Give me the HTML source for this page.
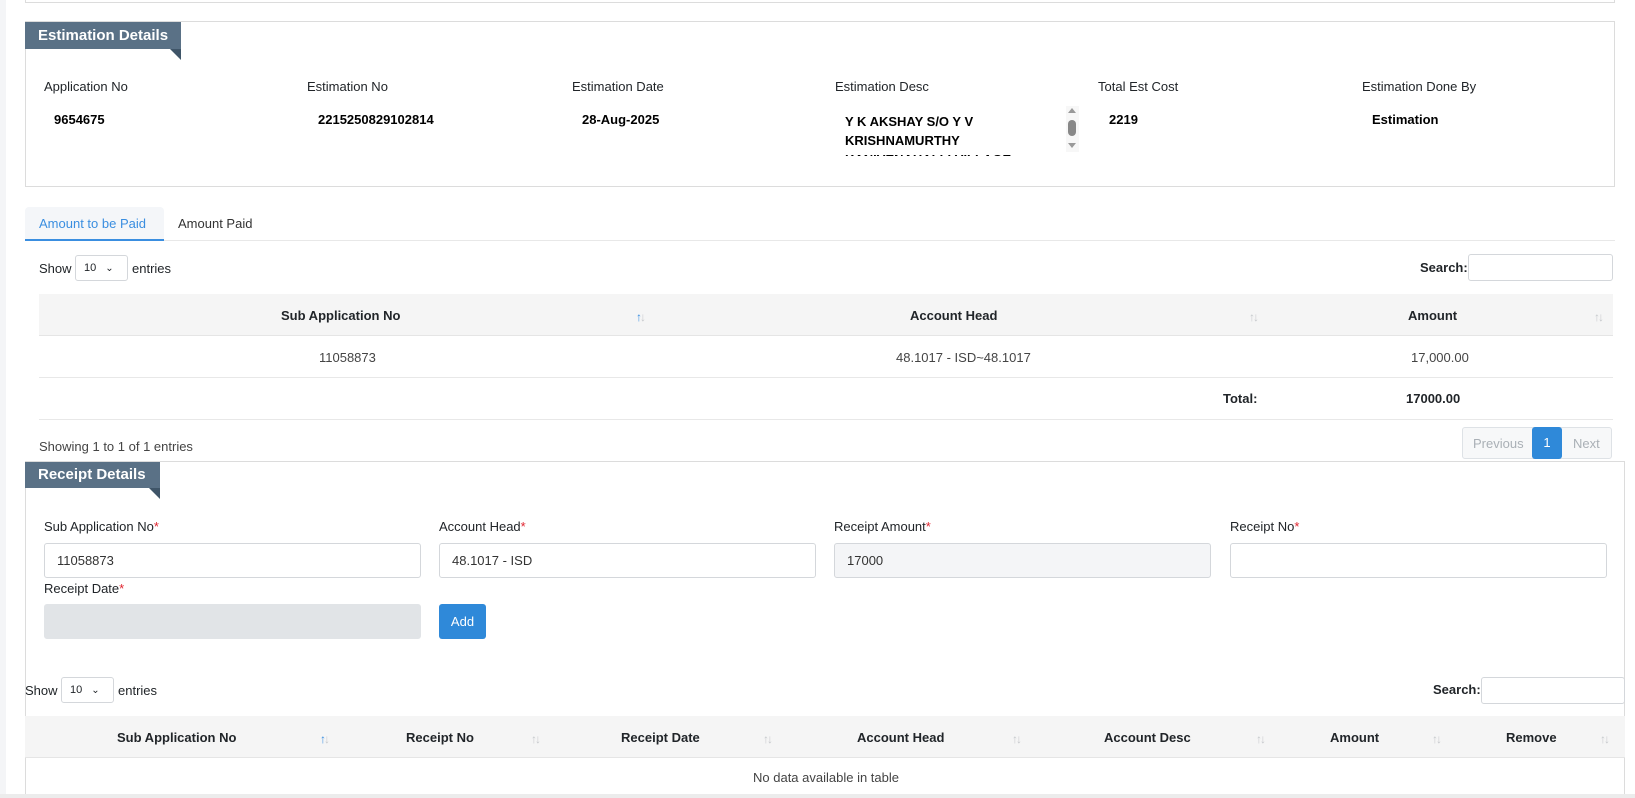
<!DOCTYPE html>
<html><head><meta charset="utf-8"><style>
*{box-sizing:border-box;margin:0;padding:0}
html{width:1635px;height:798px;overflow:hidden}
body{width:1635px;height:798px;overflow:hidden;background:#fff;font-family:"Liberation Sans",sans-serif;font-size:13px;color:#212529;position:relative}
.a{position:absolute;white-space:nowrap}
.box{position:absolute;border:1px solid #dcdcdc;background:#fff}
.tab{position:absolute;background:#5a7186;color:#fff;font-weight:bold;font-size:15px;padding-left:13px;line-height:27px}
.tail{position:absolute;width:0;height:0;border-top:11px solid #3f5568;border-left:11px solid transparent}
.lbl{font-size:13px;color:#212529}
.val{font-weight:bold;font-size:13px;color:#000}
.inp{position:absolute;border:1px solid #d4d7db;border-radius:3px;background:#fff;height:35px;padding-left:12px;line-height:33px;font-size:13px;color:#333}
.thead{position:absolute;background:#f5f5f5;border-bottom:1px solid #e5e5e5}
.hl{position:absolute;height:1px;background:#e8e8e8}
.sort{position:absolute;font-size:12px;color:#c6c9cc;letter-spacing:-2px}
.sort b{color:#3a8ee0;font-weight:normal}
.req{color:#e0242f}
</style></head><body>
<div class="a" style="left:0;top:0;width:6px;height:798px;background:#f4f5f7"></div>
<div class="a" style="left:25px;top:0;width:1590px;height:3px;border:1px solid #dcdcdc;border-top:none"></div>

<div class="box" style="left:25px;top:21px;width:1590px;height:166px"></div>
<div class="tab" style="left:25px;top:22px;width:156px;height:27px">Estimation Details</div>
<div class="tail" style="left:170px;top:49px"></div>
<div class="a lbl" style="left:44px;top:79px">Application No</div>
<div class="a lbl" style="left:307px;top:79px">Estimation No</div>
<div class="a lbl" style="left:572px;top:79px">Estimation Date</div>
<div class="a lbl" style="left:835px;top:79px">Estimation Desc</div>
<div class="a lbl" style="left:1098px;top:79px">Total Est Cost</div>
<div class="a lbl" style="left:1362px;top:79px">Estimation Done By</div>
<div class="a val" style="left:54px;top:112px">9654675</div>
<div class="a val" style="left:318px;top:112px">2215250829102814</div>
<div class="a val" style="left:582px;top:112px">28-Aug-2025</div>
<div class="a val" style="left:845px;top:112px;line-height:19px;height:44px;overflow:hidden">Y K AKSHAY S/O Y V<br>KRISHNAMURTHY<br>KANIVENAHALLI VILLAGE</div>
<div class="a" style="left:1066px;top:106px;width:13px;height:46px;background:#f7f7f7"></div>
<div class="a" style="left:1068px;top:108px;width:0;height:0;border-left:4px solid transparent;border-right:4px solid transparent;border-bottom:5px solid #999"></div>
<div class="a" style="left:1068px;top:120px;width:8px;height:16px;border-radius:4px;background:#888"></div>
<div class="a" style="left:1068px;top:143px;width:0;height:0;border-left:4px solid transparent;border-right:4px solid transparent;border-top:5px solid #999"></div>
<div class="a val" style="left:1109px;top:112px">2219</div>
<div class="a val" style="left:1372px;top:112px">Estimation</div>

<div class="a" style="left:25px;top:207px;width:139px;height:34px;background:#f4f6f9;border-radius:4px 4px 0 0;border-bottom:2px solid #3a8ee0"></div>
<div class="a" style="left:39px;top:216px;color:#3a8ee0">Amount to be Paid</div>
<div class="a" style="left:178px;top:216px;color:#333">Amount Paid</div>
<div class="hl" style="left:164px;top:240px;width:1451px"></div>

<div class="a" style="left:39px;top:261px">Show</div>
<div class="a" style="left:75px;top:255px;width:53px;height:26px;border:1px solid #d4d7db;border-radius:3px;font-size:11px;line-height:24px;padding-left:8px">10 <span style="margin-left:6px;font-size:10px">&#8964;</span></div>
<div class="a" style="left:132px;top:261px">entries</div>
<div class="a" style="left:1420px;top:260px;font-weight:bold">Search:</div>
<div class="a" style="left:1468px;top:254px;width:145px;height:27px;border:1px solid #d4d7db;border-radius:3px"></div>

<div class="thead" style="left:39px;top:294px;width:1574px;height:42px"></div>
<div class="a" style="left:281px;top:308px;font-weight:bold">Sub Application No</div>
<div class="sort" style="left:636px;top:310px"><b>&#8593;</b>&#8595;</div>
<div class="a" style="left:910px;top:308px;font-weight:bold">Account Head</div>
<div class="sort" style="left:1249px;top:310px">&#8593;&#8595;</div>
<div class="a" style="left:1408px;top:308px;font-weight:bold">Amount</div>
<div class="sort" style="left:1594px;top:310px">&#8593;&#8595;</div>
<div class="a" style="left:319px;top:350px;color:#444">11058873</div>
<div class="a" style="left:896px;top:350px;color:#444">48.1017 - ISD~48.1017</div>
<div class="a" style="left:1411px;top:350px;color:#444">17,000.00</div>
<div class="hl" style="left:39px;top:377px;width:1574px"></div>
<div class="a" style="left:1223px;top:391px;font-weight:bold">Total:</div>
<div class="a" style="left:1406px;top:391px;font-weight:bold">17000.00</div>
<div class="hl" style="left:39px;top:419px;width:1574px"></div>

<div class="a" style="left:39px;top:439px;color:#444">Showing 1 to 1 of 1 entries</div>
<div class="a" style="left:1462px;top:427px;width:150px;height:32px;border:1px solid #dee2e6;border-radius:3px;background:#f7f8f9"></div>
<div class="a" style="left:1473px;top:436px;color:#aab0b6">Previous</div>
<div class="a" style="left:1532px;top:427px;width:30px;height:32px;background:#2f89d9;border-radius:3px;color:#fff;text-align:center;line-height:32px">1</div>
<div class="a" style="left:1573px;top:436px;color:#aab0b6">Next</div>

<div class="box" style="left:25px;top:461px;width:1600px;height:337px;border-bottom:none"></div>
<div class="tab" style="left:25px;top:462px;width:135px;height:26px;line-height:26px">Receipt Details</div>
<div class="tail" style="left:149px;top:488px"></div>
<div class="a lbl" style="left:44px;top:519px">Sub Application No<span class="req">*</span></div>
<div class="a lbl" style="left:439px;top:519px">Account Head<span class="req">*</span></div>
<div class="a lbl" style="left:834px;top:519px">Receipt Amount<span class="req">*</span></div>
<div class="a lbl" style="left:1230px;top:519px">Receipt No<span class="req">*</span></div>
<div class="inp" style="left:44px;top:543px;width:377px">11058873</div>
<div class="inp" style="left:439px;top:543px;width:377px">48.1017 - ISD</div>
<div class="inp" style="left:834px;top:543px;width:377px;background:#f4f5f7">17000</div>
<div class="inp" style="left:1230px;top:543px;width:377px"></div>
<div class="a lbl" style="left:44px;top:581px">Receipt Date<span class="req">*</span></div>
<div class="inp" style="left:44px;top:604px;width:377px;background:#e1e4e7;border-color:#e1e4e7"></div>
<div class="a" style="left:439px;top:604px;width:47px;height:35px;background:#2f89d9;border-radius:3px;color:#fff;text-align:center;line-height:35px">Add</div>

<div class="a" style="left:25px;top:683px">Show</div>
<div class="a" style="left:61px;top:677px;width:53px;height:26px;border:1px solid #d4d7db;border-radius:3px;font-size:11px;line-height:24px;padding-left:8px">10 <span style="margin-left:6px;font-size:10px">&#8964;</span></div>
<div class="a" style="left:118px;top:683px">entries</div>
<div class="a" style="left:1433px;top:682px;font-weight:bold">Search:</div>
<div class="a" style="left:1481px;top:677px;width:144px;height:27px;border:1px solid #d4d7db;border-radius:3px"></div>

<div class="thead" style="left:25px;top:716px;width:1600px;height:42px"></div>
<div class="a" style="left:117px;top:730px;font-weight:bold">Sub Application No</div>
<div class="sort" style="left:320px;top:732px"><b>&#8593;</b>&#8595;</div>
<div class="a" style="left:406px;top:730px;font-weight:bold">Receipt No</div>
<div class="sort" style="left:531px;top:732px">&#8593;&#8595;</div>
<div class="a" style="left:621px;top:730px;font-weight:bold">Receipt Date</div>
<div class="sort" style="left:763px;top:732px">&#8593;&#8595;</div>
<div class="a" style="left:857px;top:730px;font-weight:bold">Account Head</div>
<div class="sort" style="left:1012px;top:732px">&#8593;&#8595;</div>
<div class="a" style="left:1104px;top:730px;font-weight:bold">Account Desc</div>
<div class="sort" style="left:1256px;top:732px">&#8593;&#8595;</div>
<div class="a" style="left:1330px;top:730px;font-weight:bold">Amount</div>
<div class="sort" style="left:1432px;top:732px">&#8593;&#8595;</div>
<div class="a" style="left:1506px;top:730px;font-weight:bold">Remove</div>
<div class="sort" style="left:1600px;top:732px">&#8593;&#8595;</div>
<div class="a" style="left:753px;top:770px;color:#444">No data available in table</div>
<div class="a" style="left:0;top:794px;width:1635px;height:4px;background:#ececec"></div>
</body></html>
